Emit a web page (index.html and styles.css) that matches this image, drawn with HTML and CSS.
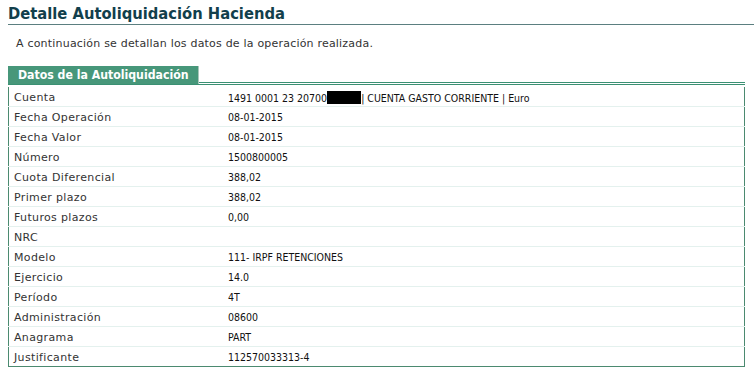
FILE: index.html
```html
<!DOCTYPE html>
<html lang="es">
<head>
    <meta charset="UTF-8">
    <title>Detalle Autoliquidación Hacienda</title>
    <link rel="stylesheet" href="styles.css">
</head>
<body>
    <div class="page">
        <h1 class="title">Detalle Autoliquidación Hacienda</h1>
        <p class="intro">A continuación se detallan los datos de la operación realizada.</p>

        <div class="tabs">
            <span class="tab">Datos de la Autoliquidación</span>
        </div>

        <!-- Datos de la operación -->
        <table class="datos">
            <tr><td class="label">Cuenta</td><td class="value">1491 0001 23 20700<span class="oculto"></span>| CUENTA GASTO CORRIENTE | Euro</td></tr>
            <tr><td class="label">Fecha Operación</td><td class="value">08-01-2015</td></tr>
            <tr><td class="label">Fecha Valor</td><td class="value">08-01-2015</td></tr>
            <tr><td class="label">Número</td><td class="value">1500800005</td></tr>
            <tr><td class="label">Cuota Diferencial</td><td class="value">388,02</td></tr>
            <tr><td class="label">Primer plazo</td><td class="value">388,02</td></tr>
            <tr><td class="label">Futuros plazos</td><td class="value">0,00</td></tr>
            <tr><td class="label">NRC</td><td class="value"></td></tr>
            <tr><td class="label">Modelo</td><td class="value">111- IRPF RETENCIONES</td></tr>
            <tr><td class="label">Ejercicio</td><td class="value">14.0</td></tr>
            <tr><td class="label">Período</td><td class="value">4T</td></tr>
            <tr><td class="label">Administración</td><td class="value">08600</td></tr>
            <tr><td class="label">Anagrama</td><td class="value">PART</td></tr>
            <tr><td class="label">Justificante</td><td class="value">112570033313-4</td></tr>
        </table>
    </div>
</body>
</html>
```

FILE: styles.css
```css
body {
    margin: 0;
    background: #ffffff;
    font-family: "DejaVu Sans", Verdana, sans-serif;
    color: #333333;
}

.page {
    padding-left: 8px;
}

.title {
    margin: 0;
    padding-top: 4px;
    font-family: "DejaVu Sans Condensed", "DejaVu Sans", sans-serif;
    font-size: 16.4px;
    line-height: 20px;
    height: 20px;
    color: #123f4c;
    border-bottom: 1px solid #5b7f80;
}

.intro {
    margin: 0;
    padding: 12px 0 0 8px;
    font-size: 11px;
    line-height: 14px;
    letter-spacing: 0.2px;
    color: #333333;
}

/* Pestaña con doble línea inferior */
.tabs {
    margin: 13px 9px 0 0;
    border-bottom: 3px double #3a9073;
    height: 18px;
}

.tab {
    display: inline-block;
    height: 18px;
    padding: 0 9px 0 10px;
    background: #47977a;
    border-right: 1px solid #a9c6bb;
    color: #ffffff;
    font-family: "DejaVu Sans Condensed", "DejaVu Sans", sans-serif;
    font-weight: bold;
    font-size: 12.2px;
    line-height: 18px;
}

.datos {
    margin: 2px 9px 0 0;
    width: calc(100% - 9px);
    border-collapse: collapse;
    border: 1px solid #4b8a70;
    border-top: none;
}

.datos td {
    height: 18px;
    padding: 1px 0 0 0;
    border-bottom: 1px solid #e4f1ee;
    font-size: 11px;
    vertical-align: middle;
}

.datos tr:last-child td {
    border-bottom: 1px solid #4b8a70;
}

.label {
    width: 214px;
    padding-left: 5px !important;
    letter-spacing: 0.35px;
    color: #333333;
}

.value {
    font-family: "DejaVu Sans Condensed", Tahoma, sans-serif;
    font-size: 10.5px !important;
    color: #111111;
}

.oculto {
    display: inline-block;
    width: 34px;
    height: 13px;
    background: #000000;
    vertical-align: -2px;
}
```
